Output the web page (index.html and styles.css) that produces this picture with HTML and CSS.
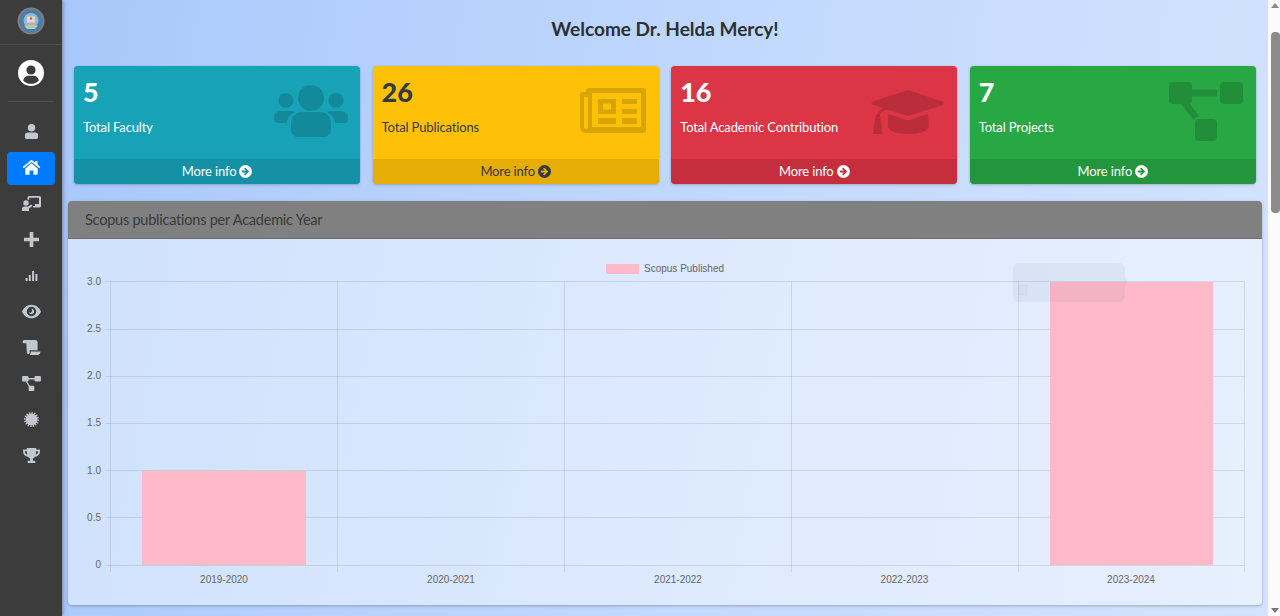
FILE: index.html
```html
<!DOCTYPE html>
<html lang="en">
<head>
    <meta charset="UTF-8" />
    <title>Dashboard</title>
    <link rel="stylesheet" href="styles.css">
</head>
<body>
    <aside class="sidebar">
        <div class="brand">
            <svg class="logo" viewBox="0 0 28 28">
                <circle cx="14" cy="14" r="13.500" fill="#8a7a72"/>
                <circle cx="14" cy="14" r="11.500" fill="#3f80b8"/>
                <circle cx="14" cy="13.500" r="7.500" fill="#9db8c4"/>
                <rect x="10" y="9.500" width="8" height="6" fill="#e2d8d0"/>
                <circle cx="14" cy="11.500" r="1.300" fill="#c8606a"/>
                <path d="M7 18.500h14l-3 3.500h-8z" fill="#c9c49a"/>
            </svg>
        </div>
        <div class="user">
            <svg class="user-icon" viewBox="0 0 26 26">
                <circle cx="13" cy="13" r="13" fill="#fff"/>
                <circle cx="13" cy="10" r="4.600" fill="#3c3c3c"/>
                <path d="M5.200 20.400c.6-3 2.800-4.600 5-4.600h5.600c2.200 0 4.400 1.600 5 4.600a10.600 10.600 0 0 1-15.600 0z" fill="#3c3c3c"/>
            </svg>
        </div>
        <nav class="nav">
            <a class="nav-item"><svg viewBox="0 0 14 16"><circle cx="7" cy="4" r="4"/><path d="M3 9h8a3 3 0 0 1 3 3v2.500a1.500 1.500 0 0 1-1.500 1.500h-11A1.500 1.500 0 0 1 0 14.500V12a3 3 0 0 1 3-3z"/></svg></a>
            <a class="nav-item active"><svg viewBox="0 0 18 15"><path d="M9 3.300 2.800 8.400V14a.7.700 0 0 0 .7.700h3.600v-4.200h3.800v4.200h3.600a.7.700 0 0 0 .7-.7V8.400z"/><path d="M17.800 6.900 15 4.600V1h-2.200v1.800L9.900.5a1.400 1.400 0 0 0-1.800 0L.2 6.900l1 1.300L9 1.900l7.800 6.300z"/></svg></a>
            <a class="nav-item"><svg viewBox="0 0 19 15"><path d="M5.500 1.500A1.500 1.500 0 0 1 7 0h10.500A1.500 1.500 0 0 1 19 1.500V10a1.500 1.500 0 0 1-1.500 1.500h-6.500V10h2V8h4V1.800H7.200V4a4 4 0 0 0-1.700-.5z"/><circle cx="4" cy="7" r="2.700"/><path d="M2.500 10.500h3.500l3.500-2 1 1.400-3.500 2.600V15H0v-2a2.500 2.500 0 0 1 2.500-2.500z"/></svg></a>
            <a class="nav-item"><svg viewBox="0 0 14 14"><path d="M5.300 0h3.400v5.300H14v3.400H8.700V14H5.300V8.700H0V5.300h5.300z"/></svg></a>
            <a class="nav-item"><svg class="small" viewBox="0 0 12 11"><path d="M0 8h2v3H0zM3.300 5h2v6h-2zM6.600 1h2v10h-2zM9.900 4h2v7h-2z"/></svg></a>
            <a class="nav-item"><svg viewBox="0 0 18 13"><path fill-rule="evenodd" d="M9 0c4 0 7.400 2.600 9 6.500C16.400 10.400 13 13 9 13S1.600 10.400 0 6.500C1.600 2.600 5 0 9 0zm0 2a4.500 4.500 0 1 0 0 9 4.500 4.500 0 0 0 0-9zm0 2a2.500 2.500 0 1 1-2.400 3.200A1.800 1.800 0 0 0 8.700 4z"/></svg></a>
            <a class="nav-item"><svg viewBox="0 0 19 16"><path d="M1.800 0h11.700a2.500 2.500 0 0 1 2.500 2.500V11H7.500v2.500a2.300 2.300 0 0 1-.7 1.500 2 2 0 0 1-2.300-2L4 3.500H1.500A1.500 1.500 0 0 1 0 2v-.4A1.800 1.800 0 0 1 1.800 0z"/><path d="M8.700 12.300H19c0 2-1 3.700-3 3.700H7.700c.7-.9 1-2.300 1-3.700z"/></svg></a>
            <a class="nav-item"><svg viewBox="0 0 74 59"><path d="M3 0h19a3 3 0 0 1 3 3v5h24V3a3 3 0 0 1 3-3h19a3 3 0 0 1 3 3v16a3 3 0 0 1-3 3H52a3 3 0 0 1-3-3v-5H25v5a3 3 0 0 1-3 3h-2l10 16h15a3 3 0 0 1 3 3v16a3 3 0 0 1-3 3H29a3 3 0 0 1-3-3V42l-11-20H3a3 3 0 0 1-3-3V3a3 3 0 0 1 3-3z"/></svg></a>
            <a class="nav-item"><svg viewBox="0 0 16 16"><circle cx="8" cy="8" r="6.300"/><circle class="burst" cx="8" cy="8" r="7" pathLength="32"/></svg></a>
            <a class="nav-item"><svg viewBox="0 0 18 16"><path fill-rule="evenodd" d="M4 0h10v1.500h4v2.800c0 2.500-2.200 4.700-5.100 5-.7 1-1.500 1.500-2.400 1.800v2.400h2.500V16H5v-2.500h2.500v-2.400c-.9-.3-1.700-.8-2.400-1.800C2.200 9 0 6.800 0 4.300V1.500h4zM2 3.500v.8c0 1.200 1 2.400 2.500 2.900C4.200 6 4.100 4.800 4 3.500zm14 0h-2c-.1 1.300-.2 2.500-.5 3.700 1.500-.5 2.500-1.700 2.500-2.900z"/></svg></a>
        </nav>
    </aside>

    <main class="main">
        <h1 class="welcome">Welcome Dr. Helda Mercy!</h1>

        <section class="stats">
            <div class="stat stat-info">
                <div class="stat-inner">
                    <div class="stat-number">5</div>
                    <div class="stat-label">Total Faculty</div>
                    <svg class="stat-icon icon-users" viewBox="0 0 74 52"><circle cx="37" cy="13" r="13"/><circle cx="12" cy="15.500" r="7.500"/><circle cx="62" cy="15.500" r="7.500"/><path d="M28 27h18c8 0 11 6 11 12v6a7 7 0 0 1-7 7H24a7 7 0 0 1-7-7v-6c0-6 3-12 11-12z"/><path d="M7 26h10c1.500 0 2.800.5 3.800 1.400-4.800 2-7.300 5.500-8 10.600H4a4 4 0 0 1-4-4v-1c0-4 3-7 7-7z"/><path d="M57 26h10c4 0 7 3 7 7v1a4 4 0 0 1-4 4h-8.800c-.7-5-3.200-8.600-8-10.600 1-.9 2.300-1.400 3.800-1.400z"/></svg>
                </div>
                <a class="stat-footer">More info <svg class="arrow" viewBox="0 0 14 14"><use href="#arrow"/></svg></a>
            </div>
            <div class="stat stat-warning">
                <div class="stat-inner">
                    <div class="stat-number">26</div>
                    <div class="stat-label">Total Publications</div>
                    <svg class="stat-icon icon-news" viewBox="0 0 66 45"><path fill-rule="evenodd" d="M9 0h54a3 3 0 0 1 3 3v39a3 3 0 0 1-3 3H6a6 6 0 0 1-6-6V6a2 2 0 0 1 2-2h4V3a3 3 0 0 1 3-3zm3 5v34h49V5zM4 9v30a2 2 0 0 0 4 0V9z"/><path fill-rule="evenodd" d="M18 11h18v15H18zm5 4.500v6h8v-6zM42 11h15v5H42zM42 21h15v5H42zM18 30h18v6H18zM42 30h15v6H42z"/></svg>
                </div>
                <a class="stat-footer">More info <svg class="arrow" viewBox="0 0 14 14"><use href="#arrow"/></svg></a>
            </div>
            <div class="stat stat-danger">
                <div class="stat-inner">
                    <div class="stat-number">16</div>
                    <div class="stat-label">Total Academic Contribution</div>
                    <svg class="stat-icon icon-cap" viewBox="0 0 73 44"><path d="M37 0l34.500 11.500a2 2 0 0 1 0 3.500L37 26 16 19.500c-5 2-7 3.500-7.500 6.500l-2.500-.5c.3-3 2.500-5.500 6.500-7.500L1.500 14.500a1.700 1.700 0 0 1 0-3z"/><path d="M17 24l19 6c1 .3 1.500.3 2 0l19-6 .8 12c0 5-9.300 8-20.300 8S17 41 17 36z"/><path d="M5 25h4l1 6 1.500 13H2l1.500-13z"/></svg>
                </div>
                <a class="stat-footer">More info <svg class="arrow" viewBox="0 0 14 14"><use href="#arrow"/></svg></a>
            </div>
            <div class="stat stat-success">
                <div class="stat-inner">
                    <div class="stat-number">7</div>
                    <div class="stat-label">Total Projects</div>
                    <svg class="stat-icon icon-tree" viewBox="0 0 74 59"><rect x="0" y="0" width="23" height="22" rx="4"/><rect x="51" y="0" width="23" height="22" rx="4"/><rect x="26" y="37" width="22" height="22" rx="4"/><path d="M23 7.500h25v7H23zM12 22h9l9 12-6 3.500z"/></svg>
                </div>
                <a class="stat-footer">More info <svg class="arrow" viewBox="0 0 14 14"><use href="#arrow"/></svg></a>
            </div>
        </section>

        <section class="panel">
            <div class="panel-head">Scopus publications per Academic Year</div>
            <div class="panel-body">
                <svg class="chart" viewBox="68 239 1194 366">
                    <rect x="606" y="264" width="33" height="10" fill="#ffb9c8"/>
                    <text class="chart-text" x="644" y="271.500">Scopus Published</text>

                    <g class="grid">
                        <path d="M105 281.500H1244.500M105 329.500H1244.500M105 376.500H1244.500M105 423.500H1244.500M105 470.500H1244.500M105 517.500H1244.500M105 565.500H1244.500"/>
                        <path d="M110.500 281V572M337.500 281V572M564.500 281V572M791.500 281V572M1018.500 281V572M1244.500 281V572"/>
                    </g>

                    <rect x="142" y="471" width="164" height="94" fill="#ffb9c8"/>
                    <rect x="1050" y="282" width="163" height="283" fill="#ffb9c8"/>

                    <g class="chart-text y-labels">
                        <text x="101" y="285">3.0</text>
                        <text x="101" y="332">2.5</text>
                        <text x="101" y="379">2.0</text>
                        <text x="101" y="426">1.5</text>
                        <text x="101" y="473.500">1.0</text>
                        <text x="101" y="520.500">0.5</text>
                        <text x="101" y="568">0</text>
                    </g>
                    <g class="chart-text x-labels">
                        <text x="224" y="582.500">2019-2020</text>
                        <text x="451" y="582.500">2020-2021</text>
                        <text x="678" y="582.500">2021-2022</text>
                        <text x="904.500" y="582.500">2022-2023</text>
                        <text x="1131" y="582.500">2023-2024</text>
                    </g>

                    <path d="M1019 263h100a6 6 0 0 1 6 6v8l2.500 5-2.500 5v9a6 6 0 0 1-6 6h-100a6 6 0 0 1-6-6v-27a6 6 0 0 1 6-6z" fill="#4a5a6a" fill-opacity="0.06"/>
                    <rect x="1019" y="285" width="8" height="10" fill="#000" fill-opacity="0.02" stroke="#000" stroke-opacity="0.03"/>
                </svg>
            </div>
        </section>
    </main>

    <div class="scrollbar">
        <span class="scroll-up"></span>
        <span class="scroll-thumb"></span>
        <span class="scroll-down"></span>
    </div>

    <svg class="defs" width="0" height="0">
        <defs>
            <symbol id="arrow" viewBox="0 0 14 14"><path fill-rule="evenodd" d="M7 0a7 7 0 1 1 0 14A7 7 0 0 1 7 0zM6.700 2.700 5.400 4l2 2H3v2h4.400l-2 2 1.300 1.300L11 7z"/></symbol>
        </defs>
    </svg>
</body>
</html>
```

FILE: styles.css
```css
html, body {
    height: 100%;
}
body {
    margin: 0;
    display: flex;
    overflow: hidden;
    background-color: #fff;
    font-family: Lato, "Noto Sans", sans-serif;
    color: #343a40;
}
a {
    color: inherit;
    text-decoration: none;
}
.defs {
    position: absolute;
}

/* sidebar */
.sidebar {
    flex: 0 0 62px;
    background-color: #3c3c3c;
    box-shadow: 1px 0 4px rgba(0, 0, 0, 0.35);
    z-index: 1;
}
.brand {
    height: 45px;
    box-sizing: border-box;
    padding-top: 7px;
    border-bottom: 1px solid #4b4b4b;
    display: flex;
    justify-content: center;
    align-items: flex-start;
}
.logo {
    width: 28px;
    height: 28px;
}
.user {
    margin: 0 8px;
    height: 56px;
    border-bottom: 1px solid #4f4f4f;
    display: flex;
    justify-content: center;
    align-items: center;
}
.user-icon {
    width: 26px;
    height: 26px;
}
.nav {
    display: flex;
    flex-direction: column;
    gap: 3px;
    margin: 14px 7px 0;
}
.nav-item {
    height: 33px;
    box-sizing: border-box;
    padding-bottom: 3px;
    border-radius: 4px;
    display: flex;
    justify-content: center;
    align-items: center;
    fill: #c2c7d0;
}
.nav-item svg {
    width: 19px;
    height: 15px;
}
.nav-item svg.small {
    width: 13px;
    height: 11px;
}
.nav-item.active {
    background-color: #007bff;
    fill: #fff;
}
.burst {
    fill: none;
    stroke: #c2c7d0;
    stroke-width: 2;
    stroke-dasharray: 1 1;
}

/* main area */
.main {
    flex: 1;
    min-width: 0;
    box-sizing: border-box;
    padding: 0 6px;
    background: linear-gradient(100deg, #a8c8fb 0%, #c3d9fd 55%, #d3e3fd 100%);
}
.welcome {
    margin: 0;
    padding-top: 16px;
    height: 66px;
    box-sizing: border-box;
    text-align: center;
    font-size: 19px;
    line-height: 26px;
    font-weight: 700;
    color: #2b3035;
}
.stats {
    display: grid;
    grid-template-columns: repeat(4, 1fr);
    gap: 12.400px;
    margin: 0 6px;
}
.stat {
    height: 118px;
    border-radius: 4px;
    overflow: hidden;
    display: flex;
    flex-direction: column;
    color: #fff;
    box-shadow: 0 0 1px rgba(0, 0, 0, 0.125), 0 1px 3px rgba(0, 0, 0, 0.2);
}
.stat-inner {
    flex: 1;
    position: relative;
    padding: 8px 9px;
}
.stat-number {
    font-size: 27px;
    line-height: 36px;
    font-weight: 900;
}
.stat-label {
    margin-top: 7px;
    font-size: 13px;
    letter-spacing: -0.14px;
    line-height: 20px;
}
.stat-icon {
    position: absolute;
    fill: rgba(0, 0, 0, 0.15);
}
.icon-users {
    right: 12px;
    top: 19px;
    width: 74px;
    height: 52px;
}
.icon-news {
    right: 13px;
    top: 22px;
    width: 66px;
    height: 45px;
}
.icon-cap {
    right: 13px;
    top: 24px;
    width: 73px;
    height: 44px;
}
.icon-tree {
    right: 13px;
    top: 16px;
    width: 74px;
    height: 59px;
}
.stat-footer {
    height: 25px;
    padding-bottom: 1px;
    box-sizing: border-box;
    display: flex;
    justify-content: center;
    align-items: center;
    gap: 3px;
    font-size: 13px;
    letter-spacing: -0.14px;
    background-color: rgba(0, 0, 0, 0.1);
}
.arrow {
    width: 13px;
    height: 13px;
    fill: currentColor;
}
.stat-info {
    background-color: #17a2b8;
}
.stat-warning {
    background-color: #ffc107;
    color: #343a40;
}
.stat-danger {
    background-color: #dc3545;
}
.stat-success {
    background-color: #28a745;
}

/* chart panel */
.panel {
    margin-top: 17px;
    height: 404px;
    border-radius: 4px;
    overflow: hidden;
    display: flex;
    flex-direction: column;
    background-color: rgba(255, 255, 255, 0.45);
    box-shadow: 0 1px 3px rgba(0, 0, 0, 0.25);
}
.panel-head {
    flex: 0 0 38px;
    box-sizing: border-box;
    padding: 0 17px;
    line-height: 37px;
    font-size: 14.500px;
    letter-spacing: -0.23px;
    background-color: #808080;
    color: #3a3a3a;
    border-bottom: 1px solid #6d6d6d;
}
.panel-body {
    flex: 1;
    min-height: 0;
}
.chart {
    display: block;
    width: 1194px;
    height: 366px;
}
.chart-text {
    font-family: "Liberation Sans", sans-serif;
    font-size: 10px;
    fill: #666;
}
.y-labels {
    text-anchor: end;
}
.x-labels {
    text-anchor: middle;
}
.grid path {
    fill: none;
    stroke: rgba(0, 0, 0, 0.09);
    stroke-width: 1;
}

/* page scrollbar */
.scrollbar {
    flex: 0 0 12px;
    position: relative;
    background-color: #fbfbfb;
}
.scroll-thumb {
    position: absolute;
    top: 32px;
    left: 3px;
    right: 0;
    height: 181px;
    border-radius: 4px;
    background-color: #8c8c8c;
}
.scroll-up, .scroll-down {
    position: absolute;
    left: 3px;
    border-left: 4px solid transparent;
    border-right: 4px solid transparent;
}
.scroll-up {
    top: 3px;
    border-bottom: 5px solid #8c8c8c;
}
.scroll-down {
    bottom: 3px;
    border-top: 5px solid #777;
}
```
